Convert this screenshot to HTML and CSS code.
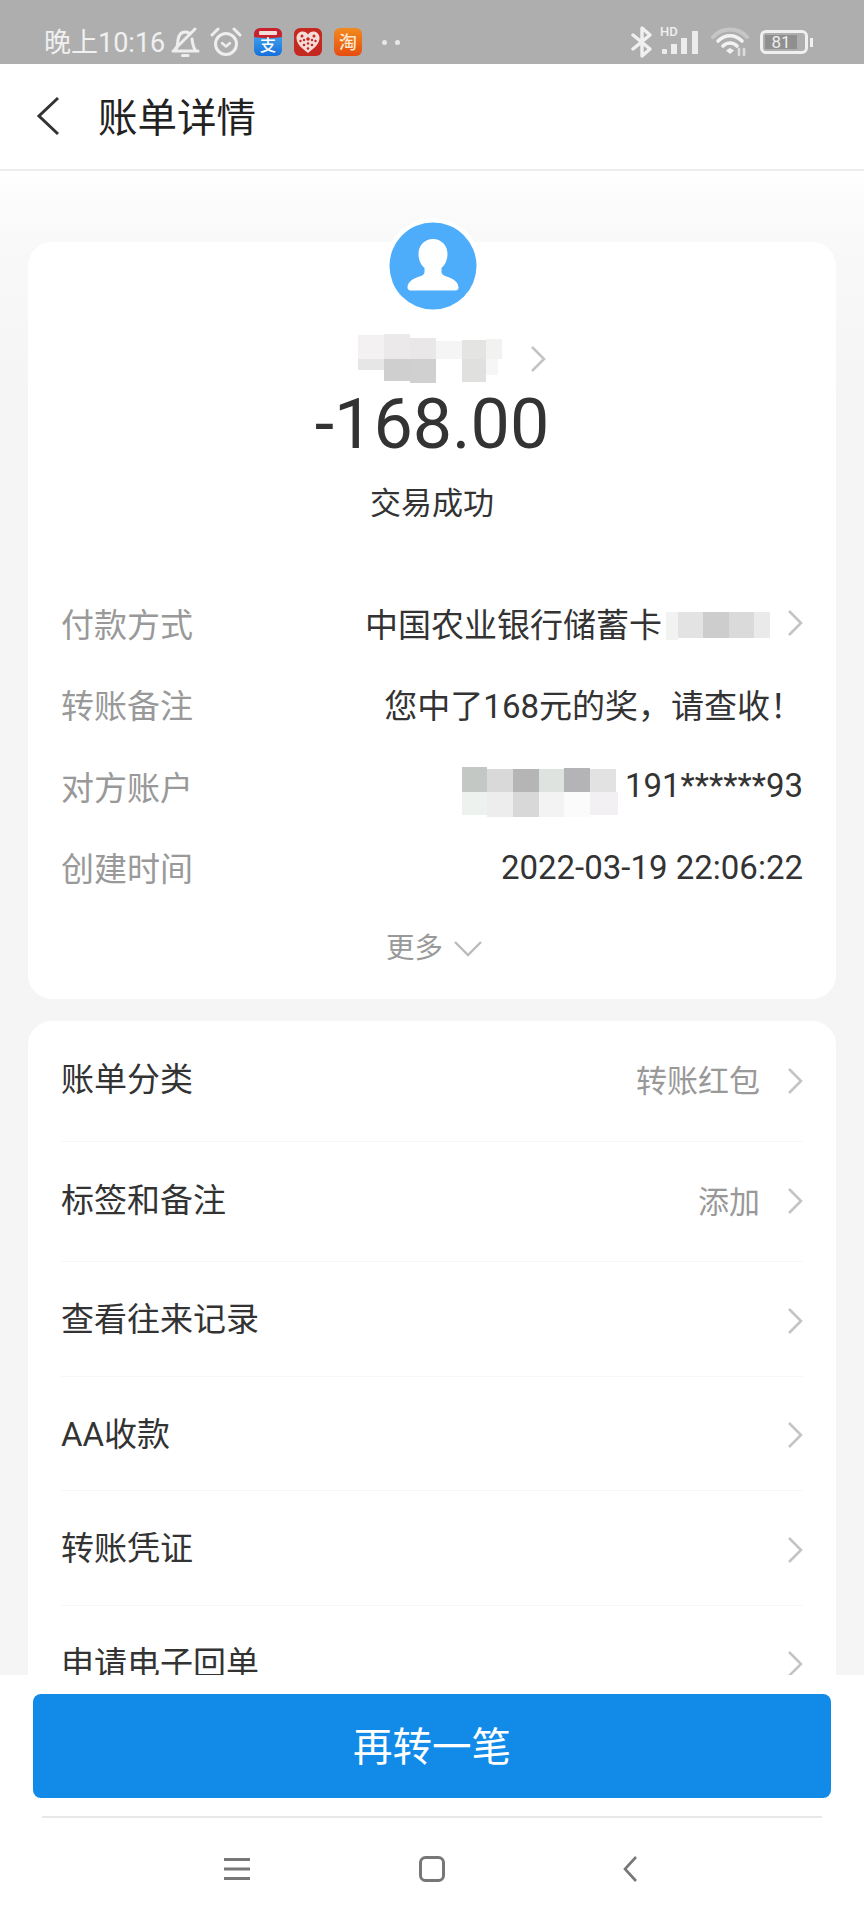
FILE: index.html
```html
<!DOCTYPE html>
<html lang="zh-CN">
<head>
    <meta charset="UTF-8">
    <meta name="viewport" content="width=device-width, initial-scale=1.0">
    <title>账单详情</title>
    <link rel="stylesheet" href="styles.css">
</head>
<body>
    <div class="phone">
        <!-- статус-бар -->
        <div class="statusbar">
            <div class="status-left">
                <span class="status-time">晚上10:16</span>
                <svg class="ic-bell" width="30" height="32" viewBox="0 0 30 32" fill="none" stroke="#eee" stroke-width="3" stroke-linecap="round" stroke-linejoin="round">
                    <path d="M3 25h25M5 25c2.500-3 2.500-7 3-11 .6-5 3.500-8 7.500-8 2 0 3.500 .8 4.600 2M22 13c.5 4 1 9 4 12"/>
                    <path d="M5 23L25 3"/>
                    <path d="M12.500 29.500h5.500"/>
                </svg>
                <svg class="ic-alarm" width="32" height="32" viewBox="0 0 32 32" fill="none" stroke="#eee" stroke-width="3" stroke-linecap="round" stroke-linejoin="round">
                    <circle cx="16" cy="18" r="10.500"/>
                    <path d="M12 17l4 3.500 4-3.500" stroke-width="2.400"/>
                    <path d="M2 9l6-6M30 9l-6-6"/>
                </svg>
                <svg class="ic-app" width="28" height="28" viewBox="0 0 28 28">
                    <defs>
                        <linearGradient id="zhiBg" x1="0" y1="0" x2="0" y2="1">
                            <stop offset="0" stop-color="#4fb4f2"/>
                            <stop offset="1" stop-color="#1670dc"/>
                        </linearGradient>
                        <linearGradient id="taoBg" x1="0" y1="0" x2="0" y2="1">
                            <stop offset="0" stop-color="#f28a1e"/>
                            <stop offset="1" stop-color="#e64c10"/>
                        </linearGradient>
                    </defs>
                    <rect width="28" height="28" rx="6" fill="url(#zhiBg)"/>
                    <path d="M0 9V6a6 6 0 0 1 6-6h16a6 6 0 0 1 6 6v3c-8 1.500-20 1.500-28 0z" fill="#c8232c"/>
                    <rect x="5" y="3" width="18" height="4" rx="1" fill="#f4dcd8"/>
                    <text x="14" y="23" text-anchor="middle" class="ic-app-text ic-app-zhi">支</text>
                </svg>
                <svg class="ic-app" width="28" height="28" viewBox="0 0 28 28">
                    <rect width="28" height="28" rx="6" fill="#c5281f"/>
                    <path d="M14 25C6 19 2.500 15 2.500 10 2.500 6 5.500 3.500 8.500 3.500c2.500 0 4.300 1.200 5.500 3 1.200-1.800 3-3 5.500-3 3 0 6 2.500 6 6.500 0 5-3.500 9-11.500 15z" fill="#f6dcd8"/>
                    <g fill="#c5281f">
                        <circle cx="8" cy="8" r="1.500"/><circle cx="14" cy="11" r="1.800"/><circle cx="20" cy="8" r="1.500"/>
                        <circle cx="10" cy="12" r="1.200"/><circle cx="18" cy="12" r="1.200"/>
                        <circle cx="6.500" cy="13" r="1.200"/><circle cx="21.500" cy="13" r="1.200"/>
                        <circle cx="10" cy="17" r="1.300"/><circle cx="14" cy="15.500" r="1.200"/><circle cx="18" cy="17" r="1.300"/>
                        <circle cx="14" cy="20.500" r="1.300"/>
                    </g>
                </svg>
                <svg class="ic-app" width="28" height="28" viewBox="0 0 28 28">
                    <rect width="28" height="28" rx="6" fill="url(#taoBg)"/>
                    <text x="14" y="21" text-anchor="middle" class="ic-app-text ic-app-tao">淘</text>
                </svg>
                <span class="status-dots"><i></i><i></i></span>
            </div>
            <div class="status-right">
                <svg class="ic-bt" width="22" height="32" viewBox="0 0 22 32" fill="none" stroke="#f0f0f0" stroke-width="3.400" stroke-linejoin="round" stroke-linecap="round">
                    <path d="M2 9l17 14-8 7V2l8 7L2 23"/>
                </svg>
                <div class="signal">
                    <span class="signal-hd">HD</span>
                    <svg width="40" height="26" viewBox="0 0 40 26" fill="#ececec">
                        <rect x="2" y="19" width="5" height="5" rx="1"/>
                        <rect x="11" y="14" width="6" height="10"/>
                        <rect x="21" y="8" width="6" height="16"/>
                        <rect x="32" y="1" width="6" height="23"/>
                    </svg>
                </div>
                <svg class="ic-wifi" width="38" height="30" viewBox="0 0 38 30" fill="none" stroke-linecap="round">
                    <path d="M2 10C11 0 27 0 36 10" stroke="#c6c6c6" stroke-width="4"/>
                    <path d="M7 14C14 7 24 7 31 14" stroke="#f2f2f2" stroke-width="3.600"/>
                    <path d="M12 19C16 15 22 15 26 19" stroke="#f2f2f2" stroke-width="3.600"/>
                    <path d="M15 23.500l4-2.500 4 2.500-4 3.500z" fill="#f2f2f2" stroke="none"/>
                    <path d="M28 28v-6M33 22v6" stroke="#dcdcdc" stroke-width="2.600"/>
                </svg>
                <div class="battery">
                    <div class="battery-body"><span class="battery-level">81</span></div>
                    <div class="battery-tip"></div>
                </div>
            </div>
        </div>

        <div class="topbar">
            <svg class="back" width="26" height="40" viewBox="0 0 26 40" fill="none" stroke="#333" stroke-width="3">
                <path d="M23 2L4 20l19 18"/>
            </svg>
            <h1>账单详情</h1>
        </div>

        <div class="scroll">
            <div class="card card-main">
                <div class="avatar">
                    <svg width="88" height="88" viewBox="0 0 88 88">
                        <circle cx="44" cy="44" r="43.500" fill="#4dadfb"/>
                        <path d="M44 17c-9 0-14.500 7-14.500 15 0 6 2.500 11 6 14v4c0 2-2 3.500-5 4.500-6 2-12 5-12 11 0 1.500 1 3 3 3h45c2 0 3-1.500 3-3 0-6-6-9-12-11-3-1-5-2.500-5-4.500v-4c3.500-3 6-8 6-14 0-8-5.500-15-14.500-15z" fill="#fff"/>
                    </svg>
                </div>
                <div class="payee">
                    <svg class="mosaic" width="144" height="50" viewBox="0 0 144 50">
                        <rect x="0" y="2" width="26" height="24" fill="#f3f1f1"/>
                        <rect x="26" y="1" width="26" height="25" fill="#ebe9e9"/>
                        <rect x="52" y="5" width="26" height="21" fill="#e9e7e7"/>
                        <rect x="78" y="8" width="26" height="18" fill="#f5f5f5"/>
                        <rect x="104" y="7" width="24" height="19" fill="#e4e5e3"/>
                        <rect x="128" y="6" width="16" height="20" fill="#f2f2f0"/>
                        <rect x="0" y="26" width="26" height="11" fill="#e6e6e6"/>
                        <rect x="26" y="26" width="26" height="22" fill="#cfcfcf"/>
                        <rect x="52" y="26" width="26" height="24" fill="#d0d0d0"/>
                        <rect x="104" y="26" width="24" height="23" fill="#e0e1df"/>
                        <rect x="128" y="26" width="12" height="16" fill="#f6f6f6"/>
                    </svg>
                    <svg class="chev chev-payee" width="16" height="28" viewBox="0 0 16 28"><path d="M2 2l12 12L2 26"/></svg>
                </div>
                <div class="amount">-168.00</div>
                <div class="trade-status">交易成功</div>

                <div class="details">
                    <div class="detail">
                        <span class="detail-label">付款方式</span>
                        <span class="detail-value">
                            中国农业银行储蓄卡
                            <svg class="mosaic mosaic-card" width="106" height="28" viewBox="0 0 106 28">
                                <rect x="0" y="0" width="12" height="28" fill="#f1f3f1"/>
                                <rect x="12" y="0" width="25" height="26" fill="#e3e3e3"/>
                                <rect x="37" y="0" width="26" height="26" fill="#cdcdcd"/>
                                <rect x="63" y="0" width="25" height="26" fill="#dadada"/>
                                <rect x="88" y="0" width="16" height="26" fill="#eaeaea"/>
                            </svg>
                            <svg class="chev" width="16" height="28" viewBox="0 0 16 28"><path d="M2 2l12 12L2 26"/></svg>
                        </span>
                    </div>
                    <div class="detail">
                        <span class="detail-label">转账备注</span>
                        <span class="detail-value">您中了168元的奖，请查收！</span>
                    </div>
                    <div class="detail">
                        <span class="detail-label">对方账户</span>
                        <span class="detail-value">
                            <svg class="mosaic mosaic-acct" width="158" height="50" viewBox="0 0 158 50">
                                <rect x="0" y="0" width="25" height="25" fill="#c4c8c4"/>
                                <rect x="25" y="2" width="26" height="23" fill="#d9d9d9"/>
                                <rect x="51" y="2" width="26" height="23" fill="#b5b5b5"/>
                                <rect x="77" y="2" width="25" height="23" fill="#dfe3df"/>
                                <rect x="102" y="1" width="26" height="24" fill="#b4b4b6"/>
                                <rect x="128" y="2" width="26" height="23" fill="#e2e2e2"/>
                                <rect x="0" y="25" width="25" height="23" fill="#eef2ee"/>
                                <rect x="25" y="25" width="26" height="25" fill="#ededed"/>
                                <rect x="51" y="25" width="26" height="25" fill="#d8d8d8"/>
                                <rect x="77" y="25" width="25" height="25" fill="#f3f3f3"/>
                                <rect x="102" y="25" width="26" height="25" fill="#fbfbfb"/>
                                <rect x="128" y="25" width="28" height="23" fill="#f3f0f3"/>
                            </svg>
                            191******93
                        </span>
                    </div>
                    <div class="detail">
                        <span class="detail-label">创建时间</span>
                        <span class="detail-value">2022-03-19 22:06:22</span>
                    </div>
                </div>
                <div class="more">
                    更多
                    <svg width="30" height="18" viewBox="0 0 30 18" fill="none" stroke="#bbb" stroke-width="2.400"><path d="M2 2l13 13L28 2"/></svg>
                </div>
            </div>

            <div class="card card-menu">
                <div class="menu-row menu-row-tall">
                    <span class="menu-label">账单分类</span>
                    <span class="menu-side"><em>转账红包</em><svg class="chev" width="16" height="28" viewBox="0 0 16 28"><path d="M2 2l12 12L2 26"/></svg></span>
                </div>
                <div class="menu-row menu-row-tall">
                    <span class="menu-label">标签和备注</span>
                    <span class="menu-side"><em>添加</em><svg class="chev" width="16" height="28" viewBox="0 0 16 28"><path d="M2 2l12 12L2 26"/></svg></span>
                </div>
                <div class="menu-row">
                    <span class="menu-label">查看往来记录</span>
                    <span class="menu-side"><svg class="chev" width="16" height="28" viewBox="0 0 16 28"><path d="M2 2l12 12L2 26"/></svg></span>
                </div>
                <div class="menu-row">
                    <span class="menu-label">AA收款</span>
                    <span class="menu-side"><svg class="chev" width="16" height="28" viewBox="0 0 16 28"><path d="M2 2l12 12L2 26"/></svg></span>
                </div>
                <div class="menu-row">
                    <span class="menu-label">转账凭证</span>
                    <span class="menu-side"><svg class="chev" width="16" height="28" viewBox="0 0 16 28"><path d="M2 2l12 12L2 26"/></svg></span>
                </div>
                <div class="menu-row">
                    <span class="menu-label">申请电子回单</span>
                    <span class="menu-side"><svg class="chev" width="16" height="28" viewBox="0 0 16 28"><path d="M2 2l12 12L2 26"/></svg></span>
                </div>
            </div>
        </div>

        <div class="footer">
            <button class="btn">再转一笔</button>
            <div class="navbar">
                <svg width="26" height="22" viewBox="0 0 26 22" fill="#777"><rect width="26" height="3"/><rect y="9.500" width="26" height="3"/><rect y="19" width="26" height="3"/></svg>
                <svg width="26" height="26" viewBox="0 0 26 26" fill="none" stroke="#777" stroke-width="3"><rect x="1.500" y="1.500" width="23" height="23" rx="5"/></svg>
                <svg class="nav-back" width="16" height="26" viewBox="0 0 16 26" fill="none" stroke="#777" stroke-width="2.600"><path d="M14 1L3 13l11 12"/></svg>
            </div>
        </div>
    </div>
</body>
</html>
```

FILE: styles.css
```css
* {
    margin: 0;
    padding: 0;
    box-sizing: border-box;
}

body {
    font-family: Roboto, 'Noto Sans CJK SC', sans-serif;
    color: #333;
    background: #f5f5f5;
}

.phone {
    width: 864px;
    height: 1920px;
    display: flex;
    flex-direction: column;
    overflow: hidden;
}

.statusbar {
    height: 64px;
    flex: none;
    background: #aeaeae;
    display: flex;
    justify-content: space-between;
    align-items: center;
    padding: 20px 51px 0 44px;
    color: #f0f0f0;
}

.status-left,
.status-right {
    display: flex;
    align-items: center;
}

.status-time {
    font-size: 27px;
    width: 126px;
    margin-bottom: 4px;
}

.ic-bell {
    margin-right: 10px;
}

.ic-alarm {
    margin-right: 12px;
}

.ic-app {
    margin-right: 12px;
}

.ic-app-text {
    fill: #fff;
    font-family: 'Noto Sans CJK SC', sans-serif;
}

.ic-app-zhi {
    font-size: 16px;
    font-weight: 500;
}

.ic-app-tao {
    font-size: 18px;
    font-weight: 500;
    fill: #fde8cc;
}

.status-dots {
    display: flex;
    gap: 8px;
    margin-left: 8px;
}

.status-dots i {
    width: 5px;
    height: 5px;
    border-radius: 50%;
    background: #e8e8e8;
}

.status-right {
    gap: 9px;
}

.ic-bt {
    margin-right: -2px;
}

.signal {
    position: relative;
    width: 40px;
    height: 28px;
    display: flex;
    align-items: flex-end;
}

.signal-hd {
    position: absolute;
    left: 0;
    top: -3px;
    font-size: 13px;
    font-weight: 500;
    line-height: 13px;
}

.ic-wifi {
    margin: 0 2px;
}

.battery {
    display: flex;
    align-items: center;
    gap: 2px;
}

.battery-body {
    width: 48px;
    height: 24px;
    border: 3px solid #f0f0f0;
    border-radius: 6px;
    padding: 2px 8px 2px 2px;
}

.battery-level {
    display: block;
    height: 100%;
    background: #8f8f8f;
    font-size: 17px;
    line-height: 14px;
    text-align: center;
    color: #eee;
}

.battery-tip {
    width: 3px;
    height: 9px;
    background: #f0f0f0;
}

.topbar {
    height: 107px;
    flex: none;
    background: white;
    border-bottom: 2px solid #ececec;
    display: flex;
    align-items: center;
    padding-left: 35px;
}

.back {
    margin-bottom: 2px;
}

.topbar h1 {
    font-size: 39.500px;
    font-weight: 400;
    margin: 0 0 5px 37px;
    color: #222;
}

.scroll {
    flex: 1;
    min-height: 0;
    overflow: hidden;
    padding: 71px 28px 0;
    background: linear-gradient(180deg, #fff 0, #f9f9f9 60px, #f5f5f5 220px);
}

.card {
    background: white;
    border-radius: 24px;
}

.card-main {
    height: 757px;
    margin-bottom: 22px;
    padding: 0 33px;
    display: flex;
    flex-direction: column;
    align-items: center;
}

.avatar {
    width: 96px;
    height: 96px;
    margin: -24px 0 0 2px;
    border-radius: 50%;
    background: white;
    display: flex;
    justify-content: center;
    align-items: center;
    flex: none;
}

.payee {
    width: 100%;
    height: 50px;
    margin-top: 19px;
    position: relative;
    display: flex;
    justify-content: center;
}

.mosaic {
    display: block;
    flex: none;
}

.payee .mosaic {
    margin-left: -4px;
}

.chev {
    fill: none;
    stroke: #c4c4c4;
    stroke-width: 2.600;
    flex: none;
}

.chev-payee {
    position: absolute;
    left: 469px;
    top: 12px;
}

.amount {
    font-size: 70px;
    line-height: 80px;
    margin-top: 1px;
    color: #333;
}

.trade-status {
    font-size: 31px;
    line-height: 44px;
    margin-top: 18px;
}

.details {
    width: 100%;
    margin-top: 56px;
    display: grid;
    grid-auto-rows: 81.500px;
}

.detail {
    display: flex;
    justify-content: space-between;
    align-items: center;
}

.detail-label {
    font-size: 33px;
    color: #999;
}

.detail-value {
    display: flex;
    align-items: center;
    font-size: 33px;
}

.detail-value .mosaic-card {
    margin: 6px 0 0 4px;
}

.detail-value .mosaic-acct {
    margin: 12px 5px 0 0;
}

.detail-value .chev {
    margin-left: 15px;
}

.more {
    margin: 21px 0 0 5px;
    font-size: 28.500px;
    line-height: 40px;
    color: #999;
    display: flex;
    align-items: center;
    gap: 10px;
}

.card-menu {
    padding: 0 33px;
    height: 700px;
}

.menu-row {
    height: 114.500px;
    padding-top: 4px;
    display: flex;
    justify-content: space-between;
    align-items: center;
    font-size: 33px;
    border-bottom: 1px solid #f7f7f7;
}

.menu-row-tall {
    height: 120.500px;
    padding-top: 0;
}

.menu-label {
    margin-bottom: 7px;
}

.menu-side {
    display: flex;
    align-items: center;
    gap: 27px;
}

.menu-side em {
    font-style: normal;
    font-size: 31px;
    color: #999;
    margin-bottom: 4px;
}

.footer {
    height: 245px;
    flex: none;
    background: white;
    padding-top: 19px;
}

.btn {
    display: block;
    width: 798px;
    height: 104px;
    margin: 0 33px;
    padding-bottom: 6px;
    border: none;
    border-radius: 8px;
    background: #128be8;
    color: white;
    font-family: inherit;
    font-size: 39.500px;
}

.navbar {
    margin: 18px 42px 0;
    height: 104px;
    border-top: 2px solid #e8e8e8;
    display: flex;
    align-items: center;
    gap: 169px;
    padding-left: 182px;
}

.nav-back {
    margin-left: 8px;
}
```
